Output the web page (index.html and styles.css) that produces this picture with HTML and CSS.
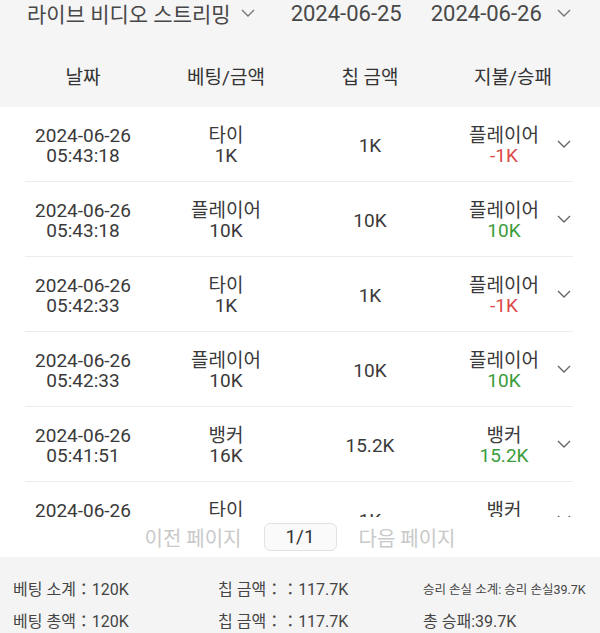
FILE: index.html
```html
<!DOCTYPE html>
<html lang="ko">
<head>
    <meta charset="UTF-8">
    <meta name="viewport" content="width=device-width,initial-scale=1.0">
    <title>베팅 기록</title>
    <link rel="stylesheet" href="styles.css">
</head>
<body>
    <header class="top">
        <div class="filter-bar">
            <span class="mode">라이브 비디오 스트리밍
                <svg class="chev" width="14" height="8" viewBox="0 0 14 8"><polyline points="1,1 7,7 13,1"/></svg>
            </span>
            <span class="date-from">2024-06-25</span>
            <span class="date-to">2024-06-26
                <svg class="chev" width="14" height="8" viewBox="0 0 14 8"><polyline points="1,1 7,7 13,1"/></svg>
            </span>
        </div>
        <div class="head-row">
            <span>날짜</span>
            <span>베팅/금액</span>
            <span>칩 금액</span>
            <span class="payout">지불/승패</span>
        </div>
    </header>

    <main class="list">
        <div class="row">
            <div>2024-06-26<br>05:43:18</div>
            <div>타이<br>1K</div>
            <div>1K</div>
            <div class="payout">플레이어<br><span class="loss">-1K</span></div>
            <svg class="chev" width="14" height="8" viewBox="0 0 14 8"><polyline points="1,1 7,7 13,1"/></svg>
        </div>
        <div class="row">
            <div>2024-06-26<br>05:43:18</div>
            <div>플레이어<br>10K</div>
            <div>10K</div>
            <div class="payout">플레이어<br><span class="win">10K</span></div>
            <svg class="chev" width="14" height="8" viewBox="0 0 14 8"><polyline points="1,1 7,7 13,1"/></svg>
        </div>
        <div class="row">
            <div>2024-06-26<br>05:42:33</div>
            <div>타이<br>1K</div>
            <div>1K</div>
            <div class="payout">플레이어<br><span class="loss">-1K</span></div>
            <svg class="chev" width="14" height="8" viewBox="0 0 14 8"><polyline points="1,1 7,7 13,1"/></svg>
        </div>
        <div class="row">
            <div>2024-06-26<br>05:42:33</div>
            <div>플레이어<br>10K</div>
            <div>10K</div>
            <div class="payout">플레이어<br><span class="win">10K</span></div>
            <svg class="chev" width="14" height="8" viewBox="0 0 14 8"><polyline points="1,1 7,7 13,1"/></svg>
        </div>
        <div class="row">
            <div>2024-06-26<br>05:41:51</div>
            <div>뱅커<br>16K</div>
            <div>15.2K</div>
            <div class="payout">뱅커<br><span class="win">15.2K</span></div>
            <svg class="chev" width="14" height="8" viewBox="0 0 14 8"><polyline points="1,1 7,7 13,1"/></svg>
        </div>
        <div class="row">
            <div>2024-06-26<br>05:41:02</div>
            <div>타이<br>1K</div>
            <div>1K</div>
            <div class="payout">뱅커<br><span class="loss">-1K</span></div>
            <svg class="chev" width="14" height="8" viewBox="0 0 14 8"><polyline points="1,1 7,7 13,1"/></svg>
        </div>
    </main>

    <nav class="pager">
        <span class="pager-link">이전 페이지</span>
        <span class="pager-num">1/1</span>
        <span class="pager-link">다음 페이지</span>
    </nav>

    <footer class="summary">
        <span>베팅 소계：120K</span>
        <span>칩 금액：：117.7K</span>
        <span class="small">승리 손실 소계: 승리 손실39.7K</span>
        <span>베팅 총액：120K</span>
        <span>칩 금액：：117.7K</span>
        <span>총 승패:39.7K</span>
    </footer>
</body>
</html>
```

FILE: styles.css
```css
body {
    margin: 0;
    font-family: Roboto, "Noto Sans CJK KR", sans-serif;
    color: #3a3a3a;
    background: #fff;
    width: 600px;
    height: 633px;
    overflow: hidden;
}
/* Top filter + column headings */
.top {
    background: #f5f5f5;
    height: 107px;
}
.filter-bar {
    display: flex;
    align-items: center;
    height: 26px;
    padding-left: 27px;
    font-size: 22px;
    color: #484848;
    white-space: nowrap;
}
.filter-bar .mode,
.filter-bar .date-to {
    display: flex;
    align-items: center;
    gap: 10px;
}
.filter-bar .mode {
    font-size: 21px;
}
.filter-bar .date-from {
    margin-left: 36px;
}
.filter-bar .date-to {
    margin-left: 29px;
    gap: 15px;
}
.chev {
    fill: none;
    stroke: #777;
    stroke-width: 1.4;
}
.head-row {
    display: grid;
    grid-template-columns: 116px 170px 118px 1fr;
    margin: 0 27px 0 25px;
    padding-top: 40px;
    line-height: 24px;
    font-size: 19px;
    text-align: center;
    color: #333;
}
.head-row .payout {
    padding-left: 24px;
}
/* Record list */
.list {
    height: 410px;
    overflow: hidden;
}
.row {
    display: grid;
    grid-template-columns: 116px 170px 118px 1fr 16px;
    align-items: center;
    margin: 0 27px 0 25px;
    padding-top: 3px;
    box-sizing: border-box;
    height: 75px;
    border-bottom: 1px solid #ececec;
    font-size: 19px;
    line-height: 20px;
    text-align: center;
}
.row .payout {
    padding-left: 22px;
}
.row .chev {
    stroke: #666;
    margin-top: -4px;
}
.loss {
    color: #dd4a4a;
}
.win {
    color: #3a9c3a;
}
/* Pagination */
.pager {
    display: flex;
    justify-content: center;
    align-items: center;
    gap: 22px;
    height: 40px;
    font-size: 20px;
}
.pager-link {
    color: #c9c9c9;
}
.pager-num {
    width: 71px;
    height: 26px;
    line-height: 26px;
    font-size: 19px;
    text-align: center;
    border: 1px solid #e2e2e2;
    border-radius: 6px;
    background: #fafafa;
    color: #333;
}
/* Totals */
.summary {
    display: grid;
    grid-template-columns: 205px 205px 1fr;
    align-items: center;
    grid-auto-rows: 32px;
    height: 76px;
    padding: 15px 0 0 13px;
    box-sizing: border-box;
    background: #f4f4f4;
    font-size: 16px;
    color: #444;
    white-space: nowrap;
}
.summary .small {
    font-size: 12.5px;
}
```
